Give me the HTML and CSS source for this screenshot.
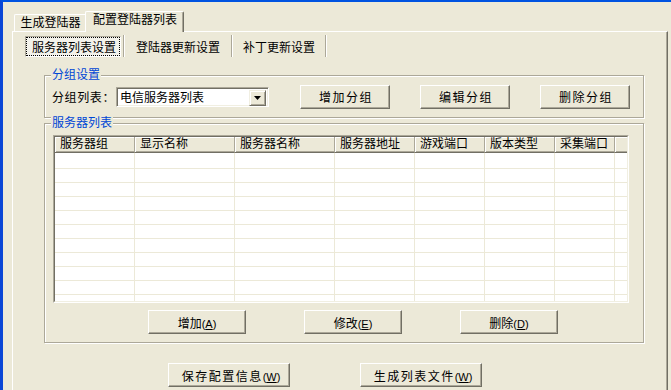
FILE: index.html
```html
<!DOCTYPE html>
<html lang="zh-CN">
<head>
  <meta charset="UTF-8" />
  <title>配置登陆器列表</title>
  <link rel="stylesheet" href="styles.css">
</head>
<body>
  <div class="window">
    <div class="tabs">
      <div class="tab">生成登陆器</div>
      <div class="tab active">配置登陆器列表</div>
    </div>

    <div class="panel">
      <div class="subtabs">
        <div class="subtab on"><span>服务器列表设置</span></div>
        <i class="sep"></i>
        <div class="subtab t2">登陆器更新设置</div>
        <i class="sep"></i>
        <div class="subtab t3">补丁更新设置</div>
        <i class="sep"></i>
      </div>

      <div class="group g1">
        <span class="caption">分组设置</span>
        <label class="lbl" for="groupList">分组列表：</label>
        <div class="combo" id="groupList">
          <span class="combo-text">电信服务器列表</span>
          <span class="combo-btn">
            <svg width="7" height="4" viewBox="0 0 7 4"><polygon points="0,0 7,0 3.5,4" fill="#000"/></svg>
          </span>
        </div>
        <button class="btn grp">增加分组</button>
        <button class="btn grp">编辑分组</button>
        <button class="btn grp">删除分组</button>
      </div>

      <div class="group g2">
        <span class="caption">服务器列表</span>
        <div class="listview">
          <div class="lv-inner">
            <div class="lv-head">
              <div class="c1">服务器组</div>
              <div class="c2">显示名称</div>
              <div class="c3">服务器名称</div>
              <div class="c4">服务器地址</div>
              <div class="c5">游戏端口</div>
              <div class="c6">版本类型</div>
              <div class="c7">采集端口</div>
              <div class="c8"></div>
            </div>
            <div class="lv-body">
              <div class="lv-row first"><i class="c1"></i><i class="c2"></i><i class="c3"></i><i class="c4"></i><i class="c5"></i><i class="c6"></i><i class="c7"></i><i class="c8"></i></div>
              <div class="lv-row"><i class="c1"></i><i class="c2"></i><i class="c3"></i><i class="c4"></i><i class="c5"></i><i class="c6"></i><i class="c7"></i><i class="c8"></i></div>
              <div class="lv-row"><i class="c1"></i><i class="c2"></i><i class="c3"></i><i class="c4"></i><i class="c5"></i><i class="c6"></i><i class="c7"></i><i class="c8"></i></div>
              <div class="lv-row"><i class="c1"></i><i class="c2"></i><i class="c3"></i><i class="c4"></i><i class="c5"></i><i class="c6"></i><i class="c7"></i><i class="c8"></i></div>
              <div class="lv-row"><i class="c1"></i><i class="c2"></i><i class="c3"></i><i class="c4"></i><i class="c5"></i><i class="c6"></i><i class="c7"></i><i class="c8"></i></div>
              <div class="lv-row"><i class="c1"></i><i class="c2"></i><i class="c3"></i><i class="c4"></i><i class="c5"></i><i class="c6"></i><i class="c7"></i><i class="c8"></i></div>
              <div class="lv-row"><i class="c1"></i><i class="c2"></i><i class="c3"></i><i class="c4"></i><i class="c5"></i><i class="c6"></i><i class="c7"></i><i class="c8"></i></div>
              <div class="lv-row"><i class="c1"></i><i class="c2"></i><i class="c3"></i><i class="c4"></i><i class="c5"></i><i class="c6"></i><i class="c7"></i><i class="c8"></i></div>
              <div class="lv-row"><i class="c1"></i><i class="c2"></i><i class="c3"></i><i class="c4"></i><i class="c5"></i><i class="c6"></i><i class="c7"></i><i class="c8"></i></div>
              <div class="lv-row"><i class="c1"></i><i class="c2"></i><i class="c3"></i><i class="c4"></i><i class="c5"></i><i class="c6"></i><i class="c7"></i><i class="c8"></i></div>
              <div class="lv-row rest"><i class="c1"></i><i class="c2"></i><i class="c3"></i><i class="c4"></i><i class="c5"></i><i class="c6"></i><i class="c7"></i><i class="c8"></i></div>
            </div>
          </div>
        </div>
        <div class="row-btns">
          <button class="btn small">增加<span class="acc">(<u>A</u>)</span></button>
          <button class="btn small">修改<span class="acc">(<u>E</u>)</span></button>
          <button class="btn small">删除<span class="acc">(<u>D</u>)</span></button>
        </div>
      </div>

      <div class="bottom-btns">
        <button class="btn wide">保存配置信息<span class="acc">(<u>W</u>)</span></button>
        <button class="btn wide">生成列表文件<span class="acc">(<u>W</u>)</span></button>
      </div>
    </div>
  </div>
</body>
</html>
```

FILE: styles.css
```css
:root {
  --face: #ECE9D8;
  --light: #ffffff;
  --shadow: #ACA899;
  --dark: #716F64;
  --caption: #0046D5;
}
* {
  box-sizing: border-box;
}
body {
  margin: 0;
  background: var(--face);
  font-family: "Liberation Sans", "Noto Sans CJK SC", sans-serif;
  font-size: 12px;
  color: #000;
  overflow: hidden;
}
.window {
  height: 390px;
  border-top: 2px solid #0053e1;
  border-left: 3px solid #0a46d6;
  overflow: hidden;
}

/* outer tabs */
.tabs {
  display: flex;
  align-items: flex-end;
  height: 29px;
  padding-left: 11px;
}
.tab {
  width: 71px;
  height: 17px;
  line-height: 16px;
  text-align: center;
  border-top: 1px solid var(--light);
  border-left: 1px solid var(--light);
  border-top-left-radius: 2px;
  padding-left: 1px;
}
.tab.active {
  width: 99px;
  height: 21px;
  line-height: 17px;
  margin-bottom: -1px;
  border-right: 1px solid var(--dark);
  border-top-right-radius: 2px;
  box-shadow: inset -1px 0 var(--shadow);
  background: var(--face);
  position: relative;
  z-index: 1;
}

.panel {
  margin: 0 3px 0 9px;
  height: 400px;
  border-top: 1px solid var(--light);
  border-left: 1px solid var(--light);
  border-right: 1px solid var(--dark);
  box-shadow: inset -1px 0 var(--shadow);
}

/* inner tabs */
.subtabs {
  display: flex;
  height: 22px;
  margin-top: 3px;
  padding-left: 12px;
}
.subtab {
  display: flex;
  align-items: center;
  justify-content: center;
}
.subtab.on {
  width: 96px;
  height: 21px;
  margin: 1px 2px 0 0;
  border: 1px solid;
  border-color: var(--shadow) var(--light) var(--light) var(--shadow);
  background: #f3f2eb;
  padding: 1px;
}
.subtab.on span {
  display: flex;
  align-items: center;
  justify-content: center;
  width: 100%;
  height: 100%;
  outline: 1px dotted #000;
  padding-left: 2px;
}
.subtab.t2 {
  width: 106px;
}
.subtab.t3 {
  width: 92px;
}
.sep {
  width: 2px;
  border-left: 1px solid var(--shadow);
  border-right: 1px solid var(--light);
}

/* group boxes */
.group {
  position: relative;
  width: 600px;
  margin-left: 31px;
  border: 1px solid var(--shadow);
  box-shadow: inset 1px 1px var(--light), 1px 1px var(--light);
}
.caption {
  position: absolute;
  left: 6px;
  top: -8px;
  padding: 0 1px;
  line-height: 14px;
  background: var(--face);
  color: var(--caption);
}
.g1 {
  display: flex;
  align-items: center;
  height: 43px;
  margin-top: 18px;
  padding-left: 7px;
}
.g1 > * {
  flex-shrink: 0;
}
.lbl {
  width: 64px;
  white-space: nowrap;
  letter-spacing: 0.6px;
}
.combo {
  display: flex;
  width: 153px;
  height: 20px;
  margin-right: 31px;
  border: 1px solid;
  border-color: var(--shadow) var(--light) var(--light) var(--shadow);
  box-shadow: inset 1px 1px var(--dark), inset -1px -1px #F1EFE2;
  background: #fff;
  padding: 2px;
}
.combo-text {
  flex: 1;
  line-height: 16px;
  padding-left: 1px;
  white-space: nowrap;
}
.combo-btn {
  display: flex;
  align-items: center;
  justify-content: center;
  width: 17px;
  height: 16px;
  background: var(--face);
  border: 1px solid;
  border-color: #F1EFE2 var(--dark) var(--dark) #F1EFE2;
  box-shadow: inset 1px 1px var(--light), inset -1px -1px var(--shadow);
}

.btn {
  font: inherit;
  color: #000;
  height: 24px;
  padding: 0;
  white-space: nowrap;
  background: var(--face);
  border: 1px solid;
  border-color: var(--light) var(--dark) var(--dark) var(--light);
  box-shadow: inset -1px -1px var(--shadow);
}
.btn.grp {
  width: 90px;
  margin-right: 30px;
  letter-spacing: 1.5px;
  padding-left: 2px;
}
.btn.grp:last-child {
  margin-right: 0;
}
.acc {
  font-size: 11px;
  letter-spacing: 0;
}

.g2 {
  height: 220px;
  margin-top: 5px;
  padding: 11px 0 0 8px;
}
.listview {
  width: 576px;
  height: 168px;
  border: 1px solid;
  border-color: var(--shadow) var(--light) var(--light) var(--shadow);
}
.lv-inner {
  display: flex;
  flex-direction: column;
  height: 100%;
  border: 1px solid;
  border-color: var(--dark) #F1EFE2 #F1EFE2 var(--dark);
  background: #fff;
}
.lv-head {
  display: flex;
  height: 16px;
  background: var(--face);
}
.lv-head div {
  height: 16px;
  line-height: 15px;
  padding-left: 5px;
  white-space: nowrap;
  border-right: 1px solid var(--shadow);
  border-bottom: 1px solid var(--dark);
  box-shadow: inset 1px 1px var(--light), inset 0 -1px var(--shadow);
}
.lv-head .c8 {
  border-right: 0;
}
.c1 { width: 80px; }
.c2 { width: 100px; }
.c3 { width: 100px; }
.c4 { width: 80px; }
.c5 { width: 70px; }
.c6 { width: 70px; }
.c7 { width: 60px; }
.c8 { width: 12px; }
.lv-body {
  flex: 1;
  display: flex;
  flex-direction: column;
}
.lv-row {
  display: flex;
  height: 14px;
  border-bottom: 1px solid var(--face);
}
.lv-row.first {
  height: 16px;
}
.lv-row.rest {
  flex: 1;
  border-bottom: 0;
}
.lv-row i {
  border-right: 1px solid var(--face);
}
.lv-row i.c8 {
  border-right: 0;
}

.row-btns {
  display: flex;
  gap: 58px;
  margin-top: 7px;
  padding-left: 95px;
}
.btn.small {
  width: 98px;
}
.bottom-btns {
  display: flex;
  gap: 70px;
  margin: 20px 0 0 155px;
}
.btn.wide {
  width: 122px;
  letter-spacing: 1.5px;
  padding-left: 4px;
}
```
